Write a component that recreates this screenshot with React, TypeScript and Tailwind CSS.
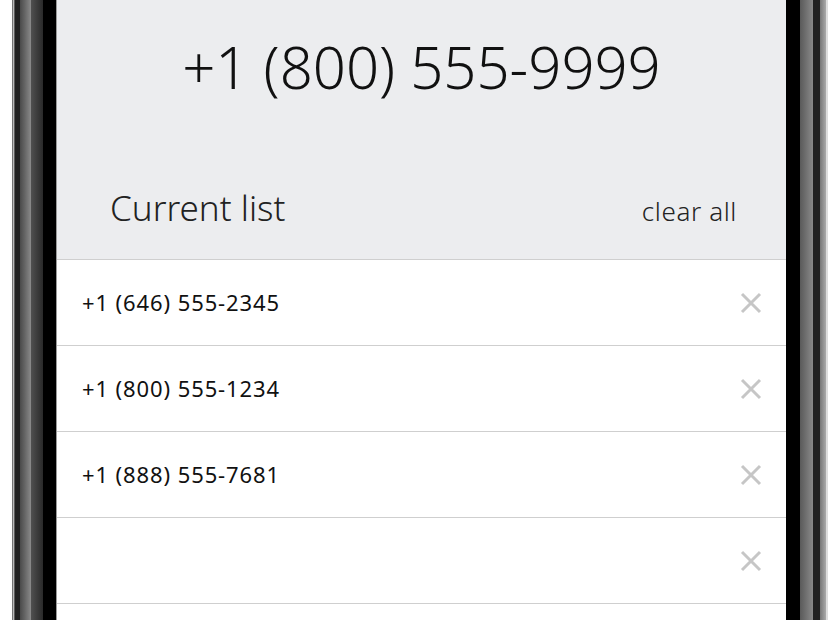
import React from 'react';

// --- DADOS ---
const NUMBERS = ['+1 (646) 555-2345', '+1 (800) 555-1234', '+1 (888) 555-7681', '', ''];

const FONT = { fontFamily: '"Noto Sans", "Open Sans", sans-serif' };

const CloseIcon = () => (
  <svg width="22" height="22" viewBox="0 0 22 22" className="text-[#c6c6c6]">
    <path d="M2 2 L20 20 M20 2 L2 20" stroke="currentColor" strokeWidth="3" strokeLinecap="butt" />
  </svg>
);

// moldura do telefone, lado esquerdo
const BezelLeft = () => (
  <div className="flex h-full shrink-0">
    <div className="w-[12px] bg-white" />
    <div className="w-[3px] bg-gradient-to-r from-[#555] via-[#bbb] to-[#333]" />
    <div className="w-[5px] bg-[#222]" />
    <div className="w-[11px] bg-gradient-to-r from-[#4a4a4a] to-[#8a8a8a]" />
    <div className="w-[12px] bg-gradient-to-r from-[#505050] to-[#2a2a2a]" />
    <div className="w-[13px] bg-black" />
    <div className="w-[1px] bg-[#9a9a9a]" />
  </div>
);

const BezelRight = () => (
  <div className="flex h-full shrink-0">
    <div className="w-[14px] bg-black" />
    <div className="w-[13px] bg-gradient-to-r from-[#5a5a5a] to-[#8a8a8a]" />
    <div className="w-[7px] bg-[#222]" />
    <div className="w-[6px] bg-gradient-to-r from-[#777] to-[#aaa]" />
    <div className="w-[2px] bg-[#ddd]" />
  </div>
);

const App: React.FC = () => {
  return (
    <div className="w-[828px] h-[620px] flex bg-white overflow-hidden" style={FONT}>
      <BezelLeft />

      <div className="flex-1 flex flex-col bg-white">
        <div className="h-[260px] shrink-0 bg-[#ecedef] border-b border-[#cfcfcf] flex flex-col">
          <div className="pt-[30px] text-center text-[58px] font-light leading-[74px] text-[#111]">
            +1 (800) 555-9999
          </div>
          <div className="mt-auto mb-[29px] flex items-baseline justify-between pl-[53px] pr-[49px]">
            <span className="text-[35px] font-light leading-[44px] text-[#222]">Current list</span>
            <span className="text-[26px] font-light leading-[36px] tracking-[0.6px] text-[#222]">clear all</span>
          </div>
        </div>

        {NUMBERS.map((num, i) => (
          <div key={i} className="h-[86px] shrink-0 border-b border-[#cfcfcf] flex items-center justify-between pl-[25px] pr-[24px]">
            <span className="text-[22px] tracking-[0.9px] text-[#111]">{num}</span>
            <CloseIcon />
          </div>
        ))}
      </div>

      <BezelRight />
    </div>
  );
};

export default App;
